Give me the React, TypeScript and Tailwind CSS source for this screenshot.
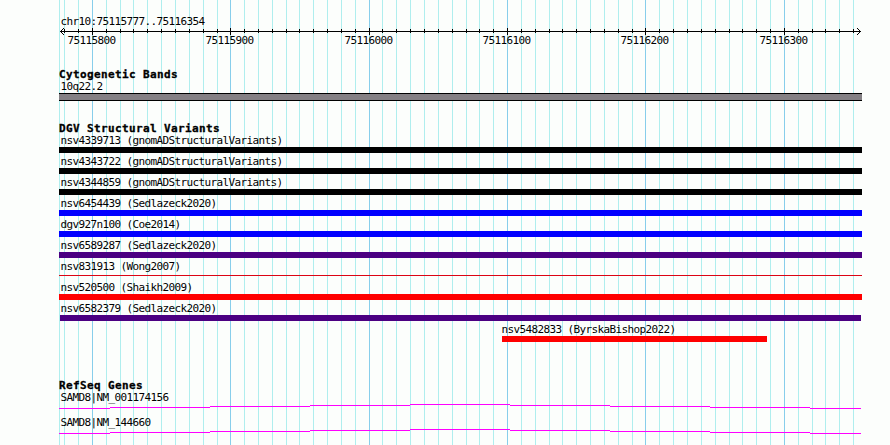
import React from 'react';

const MAJOR = [
  { x: 92, label: '75115800' },
  { x: 230, label: '75115900' },
  { x: 369, label: '75116000' },
  { x: 507, label: '75116100' },
  { x: 645, label: '75116200' },
  { x: 784, label: '75116300' },
];

const MINOR = [
  64, 78, 106, 120, 133, 147, 161, 175, 189, 203, 217, 244, 258, 272, 286, 299, 313, 327, 341, 355,
  382, 396, 410, 424, 438, 452, 466, 479, 493, 521, 535, 549, 562, 576, 590, 604, 618, 632, 659,
  673, 687, 701, 715, 729, 742, 756, 770, 798, 812, 825, 839, 853,
];

const VARIANTS = [
  { name: 'nsv4339713 (gnomADStructuralVariants)', bar: 'h-1.5 bg-black' },
  { name: 'nsv4343722 (gnomADStructuralVariants)', bar: 'h-1.5 bg-black' },
  { name: 'nsv4344859 (gnomADStructuralVariants)', bar: 'h-1.5 bg-black' },
  { name: 'nsv6454439 (Sedlazeck2020)', bar: 'h-1.5 bg-[#0000ff]' },
  { name: 'dgv927n100 (Coe2014)', bar: 'h-1.5 bg-[#0000ff]' },
  { name: 'nsv6589287 (Sedlazeck2020)', bar: 'h-1.5 bg-[#4b0082]' },
  { name: 'nsv831913 (Wong2007)', bar: 'mt-0.5 h-px bg-[#dc0414]' },
  { name: 'nsv520500 (Shaikh2009)', bar: 'h-1.5 bg-[#ff0000]' },
  { name: 'nsv6582379 (Sedlazeck2020)', bar: 'ml-px mr-px h-1.5 bg-[#4b0082]' },
  { name: 'nsv5482833 (ByrskaBishop2022)', bar: 'h-1.5 w-[265px] bg-[#ff0000]', row: 'ml-[443px]', label: '-ml-[0.5px]' },
];

const GENES = ['SAMD8|NM_001174156', 'SAMD8|NM_144660'];

const Grid = () => (
  <svg className="absolute inset-0 h-[445px] w-[890px]" shapeRendering="crispEdges">
    {[59, ...MINOR].map((x) => (
      <rect key={x} x={x} y={0} width={1} height={445} fill="#afeeee" />
    ))}
    {MAJOR.map(({ x }) => (
      <rect key={x} x={x} y={0} width={1} height={445} fill="#87ceeb" />
    ))}
  </svg>
);

const Ruler = () => (
  <div className="relative h-[41px]">
    <svg className="block h-[7px] w-[803px]" viewBox="59 28 803 7" shapeRendering="crispEdges">
      <rect x={60} y={31} width={801} height={1} />
      {MINOR.map((x) => (
        <rect key={x} x={x} y={29} width={1} height={4} />
      ))}
      {MAJOR.map(({ x }) => (
        <rect key={x} x={x} y={28} width={1} height={7} />
      ))}
      <path d="M61 30h1v1h-1zM62 29h1v1h-1zM63 28h1v1h-1zM61 32h1v1h-1zM62 33h1v1h-1zM63 34h1v1h-1z" />
      <path d="M859 30h1v1h-1zM858 29h1v1h-1zM857 28h1v1h-1zM859 32h1v1h-1zM858 33h1v1h-1zM857 34h1v1h-1z" />
    </svg>
    {MAJOR.map(({ x, label }) => (
      <span key={x} className="absolute top-1.5" style={{ left: x - 83.5 }}>
        {label}
      </span>
    ))}
  </div>
);

const Heading = ({ children }: { children: React.ReactNode }) => (
  <h2 className="text-[11px] leading-[11px] font-bold tracking-[0.378px] [-webkit-text-stroke:0.3px_black]">
    {children}
  </h2>
);

const GeneModel = () => (
  <svg className="block h-[5px] w-[802px]" viewBox="59 0 802 5" fill="#ff00ff" shapeRendering="crispEdges">
    <rect x={59} y={4} width={51} height={1} />
    <rect x={110} y={3} width={100} height={1} />
    <rect x={210} y={2} width={100} height={1} />
    <rect x={310} y={1} width={100} height={1} />
    <rect x={410} y={0} width={100} height={1} />
    <rect x={510} y={1} width={100} height={1} />
    <rect x={610} y={2} width={100} height={1} />
    <rect x={710} y={3} width={100} height={1} />
    <rect x={810} y={4} width={51} height={1} />
  </svg>
);

export default function App() {
  return (
    <div className="relative h-[445px] w-[890px] overflow-hidden bg-[#fcfefc]">
      <Grid />
      <main className="relative ml-[59px] w-[803px] pt-[15px] font-['DejaVu_Sans_Mono',monospace] text-[11px] leading-[13px] tracking-[-0.622px] whitespace-pre text-black">
        <div className="pl-[1.5px]">chr10:75115777..75116354</div>
        <Ruler />

        <section>
          <Heading>Cytogenetic Bands</Heading>
          <div className="pl-[1.5px]">10q22.2</div>
          <div className="h-2 border-y border-black bg-[#848084]" />
        </section>

        <section className="mt-[22px]">
          <Heading>DGV Structural Variants</Heading>
          {VARIANTS.map(({ name, bar, row, label }) => (
            <div key={name} className={`h-[21px] ${row ?? ''}`}>
              <div className={label ?? 'pl-[1.5px]'}>{name}</div>
              <div className={bar} />
            </div>
          ))}
        </section>

        <section className="mt-[36px]">
          <Heading>RefSeq Genes</Heading>
          {GENES.map((gene) => (
            <div key={gene} className="h-[25px]">
              <div className="pl-[1.5px]">{gene}</div>
              <GeneModel />
            </div>
          ))}
        </section>
      </main>
    </div>
  );
}
